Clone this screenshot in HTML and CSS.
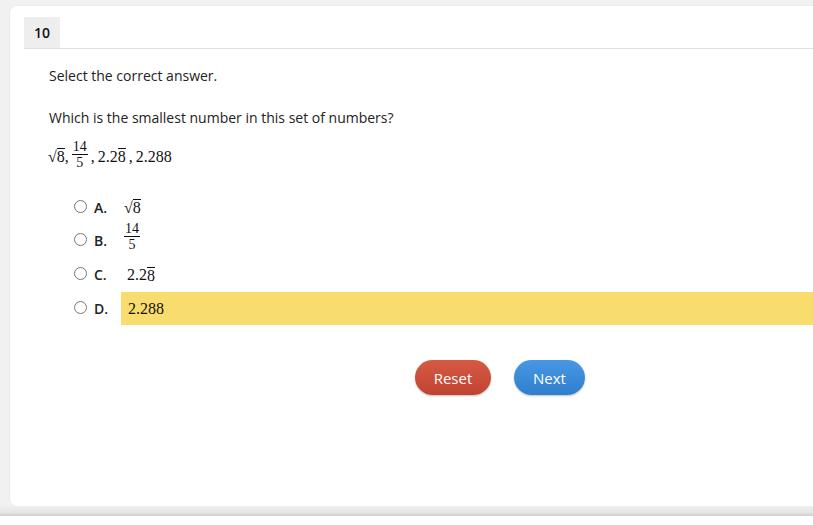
FILE: index.html
```html
<!doctype html>
<html lang="en">
<head>
    <meta charset="UTF-8">
    <title>Question 10</title>
    <link rel="stylesheet" href="styles.css">
</head>
<body>

<div class="page">
    <div class="card">
        <div class="head">
            <span class="tab">10</span>
        </div>

        <div class="question">
            <p class="lead">Select the correct answer.</p>
            <p class="stem">Which is the smallest number in this set of numbers?</p>
            <p class="math set"><span class="root">&radic;<span class="bar">8</span></span>, <span class="frac"><span class="num">14</span><span class="den">5</span></span> , 2.2<span class="ovl">8</span> , 2.288</p>

            <ul class="options">
                <li>
                    <input type="radio" name="answer">
                    <span class="letter">A.</span>
                    <span class="math choice"><span class="root">&radic;<span class="bar">8</span></span></span>
                </li>
                <li>
                    <input type="radio" name="answer">
                    <span class="letter">B.</span>
                    <span class="math choice"><span class="frac"><span class="num">14</span><span class="den">5</span></span></span>
                </li>
                <li>
                    <input type="radio" name="answer">
                    <span class="letter">C.</span>
                    <span class="math choice shift">2.2<span class="ovl">8</span></span>
                </li>
                <li>
                    <input type="radio" name="answer">
                    <span class="letter">D.</span>
                    <span class="math choice picked">2.288</span>
                </li>
            </ul>

            <div class="actions">
                <button class="btn reset">Reset</button>
                <button class="btn next">Next</button>
            </div>
        </div>
    </div>
</div>

</body>
</html>
```

FILE: styles.css
```css
* {
    padding: 0;
    margin: 0;
    list-style: none;
    box-sizing: border-box;
}

body {
    background-color: #ffffff;
    font-family: "Open Sans", "Liberation Sans", sans-serif;
    font-size: 14px;
    color: #222222;
}

.page {
    height: 516px;
    padding: 5px 0 0 9px;
    background: linear-gradient(to bottom, #f1f1f1 0, #f1f1f1 505px, #e6e6e6 512px, #cfcfcf 516px);
    overflow: hidden;
}

.card {
    height: 501px;
    background-color: #ffffff;
    border-radius: 8px 0 0 8px;
    border-left: 1px solid #e9e9e9;
    border-top: 1px solid #ececec;
    padding-top: 11px;
}

.head {
    margin-left: 14px;
    border-bottom: 1px solid #e1e1e1;
    height: 32px;
}

.tab {
    display: inline-block;
    height: 31px;
    line-height: 31px;
    padding: 0 10px;
    background-color: #eeeeee;
    font-weight: 600;
    font-size: 14px;
    color: #111111;
}

.question {
    padding-left: 39px;
}

.lead {
    margin-top: 17px;
    line-height: 20px;
}

.stem {
    margin-top: 22px;
    line-height: 20px;
}

.math {
    font-family: "Liberation Serif", "DejaVu Serif", serif;
    font-size: 16px;
    color: #111111;
}

.set {
    margin-top: 12px;
    height: 34px;
    line-height: 34px;
    margin-left: -1px;
    word-spacing: -1px;
}

.root .bar,
.ovl {
    display: inline-block;
    border-top: 1px solid #111111;
    line-height: 15px;
}

.frac {
    display: inline-flex;
    flex-direction: column;
    align-items: center;
    font-size: 14px;
    line-height: 13px;
    vertical-align: middle;
    position: relative;
    top: -4px;
}

.frac .num {
    border-bottom: 1px solid #111111;
    padding: 0 1px 1px;
}

.frac .den {
    padding-top: 1px;
}

.options {
    margin-top: 17px;
    padding-left: 24px;
}

.options li {
    display: flex;
    align-items: center;
    height: 33px;
}

.options li:nth-child(3) {
    height: 35px;
}

.options input {
    width: 13px;
    height: 13px;
    margin: 0 7px 0 1px;
    position: relative;
    top: -1px;
}

.letter {
    width: 27px;
    font-weight: 600;
    font-size: 14px;
}

.choice {
    flex: 1;
    align-self: stretch;
    display: flex;
    align-items: center;
    padding-left: 3px;
}

.choice.shift {
    padding-left: 6px;
}

.choice.picked {
    background-color: #f8dc6e;
    padding-left: 7px;
}

.actions {
    margin-top: 35px;
    padding-left: 366px;
    display: flex;
    gap: 23px;
}

.btn {
    height: 35px;
    border: none;
    border-radius: 18px;
    color: #ffffff;
    font-family: "Open Sans", "Liberation Sans", sans-serif;
    font-size: 15px;
    cursor: pointer;
}

.reset {
    width: 76px;
    background: linear-gradient(to bottom, #d65a43, #bf4330);
    box-shadow: 0 1px 2px rgba(0, 0, 0, 0.25);
}

.next {
    width: 71px;
    background: linear-gradient(to bottom, #4897e3, #2f7fcf);
    box-shadow: 0 1px 2px rgba(0, 0, 0, 0.25);
}
```
